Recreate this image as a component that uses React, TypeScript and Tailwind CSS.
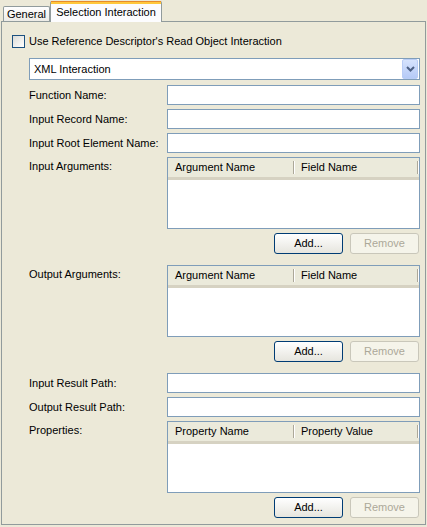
import React from 'react';

const font = { fontFamily: '"Liberation Sans", Arial, sans-serif' };

const TextField: React.FC = () => (
  <div className="h-[20px] flex-1 border border-[#7F9DB9] bg-white" />
);

const FieldRow: React.FC<{ label: string; className?: string }> = ({ label, className = '' }) => (
  <div className={`flex items-center ${className}`}>
    <div className="w-[138px] shrink-0 text-[11px] leading-[13px] text-black">{label}</div>
    <TextField />
  </div>
);

const XpButton: React.FC<{ label: string; disabled?: boolean }> = ({ label, disabled }) =>
  disabled ? (
    <div className="flex h-[21px] w-[69px] items-center justify-center rounded-[3px] border border-[#C9C7BA] bg-[#F5F4EA] text-[11px] text-[#ACA899]">
      {label}
    </div>
  ) : (
    <div className="flex h-[21px] w-[69px] items-center justify-center rounded-[3px] border border-[#003C74] bg-gradient-to-b from-white to-[#E6E5DE] text-[11px] text-black">
      {label}
    </div>
  );

const TableRow: React.FC<{ label: string; cols: [string, string]; className?: string }> = ({
  label,
  cols,
  className = '',
}) => (
  <div className={className}>
    <div className="flex items-start">
      <div className="w-[138px] shrink-0 pt-[3px] text-[11px] leading-[13px] text-black">{label}</div>
      <div className="flex h-[72px] flex-1 flex-col border border-[#7F9DB9] bg-white">
        {/* header */}
        <div className="flex h-[22px] shrink-0 items-stretch bg-[#EBEADB] border-b-[3px] border-[#D6D2C2]">
          <div className="flex w-[125px] items-center pl-[7px] text-[11px] text-black">{cols[0]}</div>
          <div className="my-[3px] w-[2px] border-l border-[#ACA899] border-r border-r-white" />
          <div className="flex w-[122px] items-center pl-[6px] text-[11px] text-black">{cols[1]}</div>
          <div className="my-[3px] w-[2px] border-l border-[#ACA899] border-r border-r-white" />
        </div>
        <div className="flex-1" />
      </div>
    </div>
    <div className="mt-[4px] flex justify-end gap-[7px] pr-[1px]">
      <XpButton label="Add..." />
      <XpButton label="Remove" disabled />
    </div>
  </div>
);

const App: React.FC = () => {
  return (
    <div className="h-[527px] w-[427px] overflow-hidden bg-[#ECE9D8]" style={font}>
      {/* Tabs */}
      <div className="flex h-[21px] items-end pl-[3px]">
        <div className="flex h-[15px] w-[47px] items-center justify-center rounded-t-[2px] border border-b-0 border-[#919B9C] bg-gradient-to-b from-white to-[#ECEBE6] text-[11px] text-black">
          General
        </div>
        <div className="relative z-10 -mb-px flex h-[21px] w-[112px] flex-col rounded-t-[2px] border-x border-[#919B9C] bg-[#FCFCFE]">
          <div className="h-[1px] bg-[#E68B2C]" />
          <div className="h-[2px] bg-[#FFC83C]" />
          <div className="flex flex-1 items-center justify-center pb-[1px] text-[11px] text-black">
            Selection Interaction
          </div>
        </div>
      </div>

      {/* Panel */}
      <div className="ml-[1px] h-[504px] w-[425px] border border-[#919B9C] bg-[#ECE9D8]">
        <div className="ml-[10px] mt-[13px] flex items-center gap-[4px]">
          <div className="h-[13px] w-[13px] border border-[#1C5180] bg-gradient-to-br from-[#DCDCD7] to-white" />
          <span className="text-[11px] leading-[13px] text-black">
            Use Reference Descriptor's Read Object Interaction
          </span>
        </div>

        <div className="pl-[27px] pr-[5px]">
          {/* combo */}
          <div className="mt-[10px] flex h-[22px] items-center border border-[#7F9DB9] bg-white pr-[1px]">
            <span className="flex-1 pl-[4px] text-[11px] text-black">XML Interaction</span>
            <div className="flex h-[20px] w-[16px] items-center justify-center rounded-[2px] border border-[#B9CDF6] bg-gradient-to-b from-[#D6E3FD] to-[#B5CAF7]">
              <svg width="9" height="6" viewBox="0 0 9 6">
                <path d="M1 1 L4.5 4.5 L8 1" fill="none" stroke="#4D6185" strokeWidth="2" />
              </svg>
            </div>
          </div>

          <FieldRow label="Function Name:" className="mt-[5px]" />
          <FieldRow label="Input Record Name:" className="mt-[4px]" />
          <FieldRow label="Input Root Element Name:" className="mt-[4px]" />

          <TableRow label="Input Arguments:" cols={['Argument Name', 'Field Name']} className="mt-[4px]" />
          <TableRow label="Output Arguments:" cols={['Argument Name', 'Field Name']} className="mt-[11px]" />

          <FieldRow label="Input Result Path:" className="mt-[11px]" />
          <FieldRow label="Output Result Path:" className="mt-[4px]" />

          <TableRow label="Properties:" cols={['Property Name', 'Property Value']} className="mt-[4px]" />
        </div>
      </div>
    </div>
  );
};

export default App;
